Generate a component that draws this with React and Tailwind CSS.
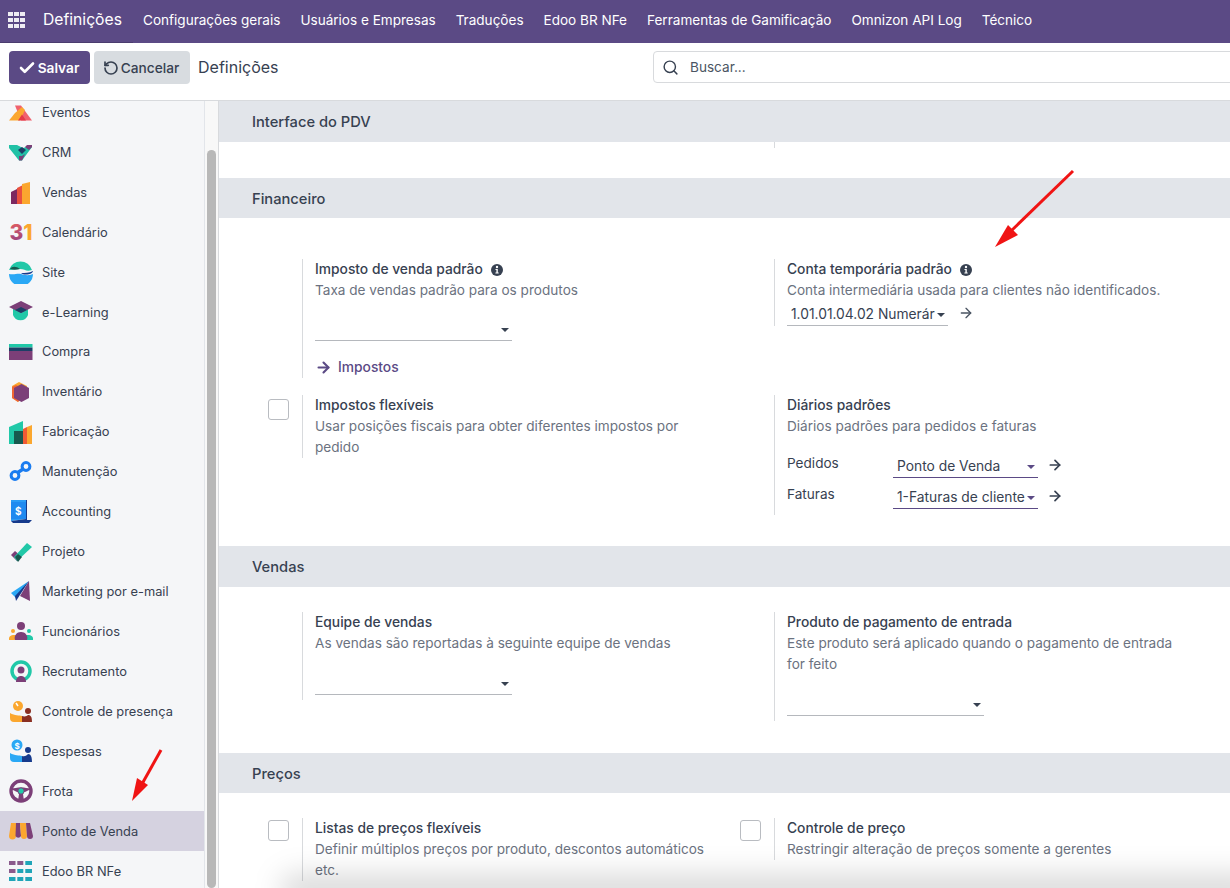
import React from 'react';
import { Check, RotateCcw, Search, ArrowRight } from 'lucide-react';

const Eventos = () => (
    <svg viewBox="0 0 24 24" className="w-6 h-6">
        <path d="M6 5.500h6l11 15H12z" fill="#f0616d" />
        <path d="M0 20.500L6 13l7-6 3 3-5 10.500z" fill="#fba72f" />
        <path d="M9 20.500l4-6 4 6z" fill="#e63946" />
    </svg>
);
const Crm = () => (
    <svg viewBox="0 0 24 24" className="w-6 h-6">
        <path d="M0 5h8l6 3 9-3v2L13 20.500h-3L0 8z" fill="#21c1a6" />
        <path d="M9 10l4-3 4 3-4 4z" fill="#1d3f66" />
        <path d="M18 5h5v2l-3 3-4-3z" fill="#7c3f78" />
        <path d="M10 16l3 0 3-2-3 6.500h-3z" fill="#7c3f78" />
    </svg>
);
const Vendas = () => (
    <svg viewBox="0 0 24 24" className="w-6 h-6">
        <path d="M2 12l6-3v15H2z" fill="#7c2860" />
        <path d="M8 8l6-3v19H8z" fill="#e9503e" />
        <path d="M13 4l8-2v22h-8z" fill="#fba72f" />
    </svg>
);
const Calendario = () => (
    <svg viewBox="0 0 24 24" className="w-6 h-6">
        <defs>
            <linearGradient id="cal3" x1="0" y1="0" x2="0" y2="1">
                <stop offset="0" stopColor="#e9605e" />
                <stop offset="1" stopColor="#8c3f85" />
            </linearGradient>
        </defs>
        <text x="0.500" y="20" fontFamily="Inter, sans-serif" fontWeight="800" fontSize="21">
            <tspan fill="url(#cal3)">3</tspan>
            <tspan fill="#fba72f">1</tspan>
        </text>
    </svg>
);
const Site = () => (
    <svg viewBox="0 0 24 24" className="w-6 h-6">
        <path d="M0 10a12 12 0 0123 0c-6 2-7-1-12-1-4 0-7 1-11 1z" fill="#21c8a8" />
        <path d="M0 14c6 1 8-1 12 0s7 2 12 0a12 12 0 01-24 0z" fill="#2aa8f5" />
        <path d="M1 9c2-3 6-3 10 0-4 1-7 1-10 0z" fill="#17594f" />
        <path d="M12 13c4 0 8 0 12-2 0 3-8 5-12 2z" fill="#163a8c" />
    </svg>
);
const Learning = () => (
    <svg viewBox="0 0 24 24" className="w-6 h-6">
        <path d="M4 9h15v6a8 8 0 01-15 0z" fill="#21c8a8" />
        <path d="M0 7l12-6 12 6-12 6z" fill="#7c3f78" />
        <path d="M6 10l6-3 6 3-6 3z" fill="#1d3f66" />
    </svg>
);
const Compra = () => (
    <svg viewBox="0 0 24 24" className="w-6 h-6">
        <path d="M0 4h23.500v3.500H0z" fill="#21c8a8" />
        <path d="M0 7.500h23.500V11H0z" fill="#1d3f66" />
        <path d="M0 11h23.500v9H0z" fill="#7c3f78" />
    </svg>
);
const Inventario = () => (
    <svg viewBox="0 0 24 24" className="w-6 h-6">
        <path d="M10 2l8 4v8l-9 8-6-4V6z" fill="#fba72f" />
        <path d="M3 7l4-2 4 2v12l-2 3-6-4z" fill="#ef5a35" opacity=".85" />
        <path d="M12.500 4l7.500 4v10l-7.500 4L5 18V8z" fill="#7c3f78" />
    </svg>
);
const Fabricacao = () => (
    <svg viewBox="0 0 24 24" className="w-6 h-6">
        <path d="M0 7L14 1v23H0z" fill="#21c8a8" />
        <path d="M5 11h9v13H5z" fill="#17594f" />
        <path d="M14 9l4-2v17h-4z" fill="#ef5a35" />
        <path d="M18 7l5-2v19h-5z" fill="#fba72f" />
    </svg>
);
const Manutencao = () => (
    <svg viewBox="0 0 24 24" className="w-6 h-6">
        <circle cx="6" cy="15.500" r="3.900" fill="none" stroke="#1a7cf0" strokeWidth="3" />
        <circle cx="17" cy="6.500" r="3.900" fill="none" stroke="#1a7cf0" strokeWidth="3" />
        <path d="M8 13l7-4.500" stroke="#1a7cf0" strokeWidth="3.400" />
    </svg>
);
const Accounting = () => (
    <svg viewBox="0 0 24 24" className="w-6 h-6">
        <path d="M2 0h15v19l-15 2z" fill="#2a9cf5" />
        <path d="M2 2h15v17H2z" fill="#1e8af0" />
        <path d="M17 0h1v20h5l-3 3H4l-2-2 15-2z" fill="#163a8c" />
        <text x="6" y="15" fontFamily="Inter, sans-serif" fontWeight="700" fontSize="10" fill="#ffffff">$</text>
    </svg>
);
const Projeto = () => (
    <svg viewBox="0 0 24 24" className="w-6 h-6">
        <path d="M2 15l4-4 6 5-4 5z" fill="#7c3f78" />
        <path d="M8 21l-3-4L18 3l5 4z" fill="#21c8a8" />
        <path d="M6 17l3-3 4 3-4 5z" fill="#17594f" />
    </svg>
);
const Marketing = () => (
    <svg viewBox="0 0 24 24" className="w-6 h-6">
        <path d="M2 13L20 1 7 18z" fill="#2aa8f5" />
        <path d="M20 1L7 21l-1-5z" fill="#163a8c" />
        <path d="M20 1l1 20-10-5z" fill="#7c3f78" />
    </svg>
);
const Funcionarios = () => (
    <svg viewBox="0 0 24 24" className="w-6 h-6">
        <circle cx="12" cy="6" r="4" fill="#7c3f78" />
        <circle cx="4" cy="11" r="2" fill="#fba72f" />
        <circle cx="20" cy="11" r="2" fill="#21c8a8" />
        <path d="M0 20a4 4 0 014-5h4v5z" fill="#fba72f" />
        <path d="M24 20a4 4 0 00-4-5h-4v5z" fill="#21c8a8" />
        <path d="M6 20a6 6 0 016-8 6 6 0 016 8z" fill="#7c3f78" />
    </svg>
);
const Recrutamento = () => (
    <svg viewBox="0 0 24 24" className="w-6 h-6">
        <circle cx="12" cy="11" r="9" fill="none" stroke="#21c8a8" strokeWidth="3.500" />
        <circle cx="12" cy="10" r="3.500" fill="#7c3f78" />
        <path d="M7 22c0-5 3-6 5-6s5 1 5 6z" fill="#7c3f78" />
    </svg>
);
const Presenca = () => (
    <svg viewBox="0 0 24 24" className="w-6 h-6">
        <circle cx="9" cy="6" r="5" fill="#fba72f" />
        <path d="M9 6l-2-3" stroke="#ffffff" strokeWidth="1.500" />
        <path d="M1 13c5 3 9 2 12 3v6H5a4 4 0 01-4-4z" fill="#fba72f" />
        <circle cx="19" cy="11" r="3" fill="#8a2f22" />
        <path d="M13 16c3 1 5 0 6-1 3 0 4 2 4 7H13z" fill="#8a2f22" />
    </svg>
);
const Despesas = () => (
    <svg viewBox="0 0 24 24" className="w-6 h-6">
        <circle cx="8" cy="6" r="5.500" fill="#2aa8f5" />
        <text x="5.500" y="9.500" fontFamily="Inter, sans-serif" fontWeight="700" fontSize="8" fill="#ffffff">$</text>
        <path d="M1 14c5 3 9 2 12 3v6H5a4 4 0 01-4-4z" fill="#2aa8f5" />
        <circle cx="19" cy="11" r="3" fill="#163a8c" />
        <path d="M13 17c3 1 5-1 6-2 3 0 4 3 4 8H13z" fill="#163a8c" />
    </svg>
);
const Frota = () => (
    <svg viewBox="0 0 24 24" className="w-6 h-6">
        <circle cx="12" cy="12" r="10" fill="none" stroke="#7c3f78" strokeWidth="3.400" />
        <path d="M2 10c6-2 14-2 20 0l-6 3H8zM10 15h4l1 7H9z" fill="#7c3f78" />
        <circle cx="12" cy="12" r="3.200" fill="#21c8a8" stroke="#7c3f78" strokeWidth="1" />
    </svg>
);
const Pdv = () => (
    <svg viewBox="0 0 24 24" className="w-6 h-6">
        <path d="M2 4h5v13a3 3 0 01-7 0z" fill="#fba72f" />
        <path d="M7 4h4l1 13a3 3 0 01-5.500 0z" fill="#7c3f78" />
        <path d="M11 4h6l1 13a3 3 0 01-6 0z" fill="#fba72f" />
        <path d="M17 4h4l3 13a3 3 0 01-6 0z" fill="#7c3f78" />
    </svg>
);
const EdooGrid = () => (
    <svg viewBox="0 0 24 24" className="w-6 h-6">
        <path d="M0 2h6.500v4H0zM8.300 2h6v4h-6z" fill="#8a5a8c" />
        <path d="M16.300 2H23v4h-6.700z" fill="#1fa5b8" />
        <path d="M0 10h6.500v4H0z" fill="#8a5a8c" />
        <path d="M8.300 10h6v4h-6zM16.300 10H23v4h-6.700zM0 18h6.500v4H0zM8.300 18h6v4h-6zM16.300 18H23v4h-6.700z" fill="#1fa5b8" />
    </svg>
);

const apps = [
    { label: 'Eventos', Icon: Eventos },
    { label: 'CRM', Icon: Crm },
    { label: 'Vendas', Icon: Vendas },
    { label: 'Calendário', Icon: Calendario },
    { label: 'Site', Icon: Site },
    { label: 'e-Learning', Icon: Learning },
    { label: 'Compra', Icon: Compra },
    { label: 'Inventário', Icon: Inventario },
    { label: 'Fabricação', Icon: Fabricacao },
    { label: 'Manutenção', Icon: Manutencao },
    { label: 'Accounting', Icon: Accounting },
    { label: 'Projeto', Icon: Projeto },
    { label: 'Marketing por e-mail', Icon: Marketing },
    { label: 'Funcionários', Icon: Funcionarios },
    { label: 'Recrutamento', Icon: Recrutamento },
    { label: 'Controle de presença', Icon: Presenca },
    { label: 'Despesas', Icon: Despesas },
    { label: 'Frota', Icon: Frota },
    { label: 'Ponto de Venda', Icon: Pdv, active: true },
    { label: 'Edoo BR NFe', Icon: EdooGrid },
];

const menu = ['Configurações gerais', 'Usuários e Empresas', 'Traduções', 'Edoo BR NFe', 'Ferramentas de Gamificação', 'Omnizon API Log', 'Técnico'];

const InfoDot = () => (
    <svg viewBox="0 0 12 12" className="ml-[8px] w-[12px] h-[12px] shrink-0">
        <circle cx="6" cy="6" r="6" fill="#374151" />
        <circle cx="6" cy="3" r="1.200" fill="#ffffff" />
        <path d="M4.500 5h2.300v3.500h.9v1H4.400v-1h1V6h-.9z" fill="#ffffff" />
    </svg>
);

const Caret = ({ purple }) => (
    <span className={`shrink-0 w-0 h-0 border-x-[4px] border-x-transparent border-t-[4px] ${purple ? 'border-t-[#5b4a85]' : 'border-t-[#374151]'}`}></span>
);

const Select = ({ value, className, purple }) => (
    <div className={`flex items-center justify-between h-[24px] border-b pt-[2px] pl-[4px] pr-[3px] text-[13.8px] text-[#374151] ${purple ? 'border-[#5b4a85]' : 'border-[#b5b8bd]'} ${className}`}>
        <span className="min-w-0 whitespace-nowrap overflow-hidden">{value}</span>
        <Caret purple={purple} />
    </div>
);

const Setting = ({ title, desc, info, checkbox, children }) => (
    <div className="flex items-start">
        <div className={`w-[48px] pl-[14px] shrink-0 ${checkbox}`}>
            {checkbox && <div className="w-[21px] h-[21px] rounded-[3px] border border-[#b9bcc1] bg-white"></div>}
        </div>
        <div className="border-l border-[#d8dadd] pl-[12px] w-[424px] pr-[15px]">
            <div className="flex items-center h-[21px] font-medium text-[13.8px] text-[#374151]">
                {title}
                {info && <InfoDot />}
            </div>
            <p className="text-[13.6px] leading-[21px] text-[#6b7280]">{desc}</p>
            {children}
        </div>
    </div>
);

const Section = ({ title, h, children }) => (
    <>
        <div className={`flex items-center pl-[33px] pt-[2px] bg-[#e2e5ea] font-medium text-[14.7px] text-[#374151] ${h}`}>{title}</div>
        {children}
    </>
);

const Row = ({ className, children }) => (
    <div className={`grid grid-cols-[472px_472px] pl-[35px] ${className}`}>{children}</div>
);

export default function App() {
    return (
        <div className="relative w-[1230px] h-[888px] overflow-hidden flex flex-col bg-white font-['Inter',sans-serif]">
            <header className="h-[43px] shrink-0 flex items-center bg-[#5b4a85] text-white">
                <div className="w-[133px] h-full flex items-center border-b border-[#4a3c6e] shrink-0 pl-[8px] pb-[2px]">
                    <div className="grid grid-cols-3 gap-[1.5px] w-[17px] mr-[18px]">
                        {[...Array(9)].map((_, i) => <span key={i} className="h-[4.5px] bg-white/90"></span>)}
                    </div>
                    <span className="text-[15.7px] whitespace-nowrap">Definições</span>
                </div>
                <nav className="flex items-center gap-[20px] ml-[10px] pb-[2px] text-[13.55px] whitespace-nowrap">
                    {menu.map((m) => <span key={m}>{m}</span>)}
                </nav>
            </header>

            <div className="h-[58px] shrink-0 flex items-start pt-[8px] pl-[9px] border-b border-[#d8dadd] bg-white">
                <button className="shrink-0 flex items-center justify-center w-[81px] h-[33px] pt-[1px] pr-[2px] rounded-[4px] bg-[#5b4a85] text-white text-[13.7px] font-semibold">
                    <Check className="w-[18px] h-[18px] mr-[2px]" strokeWidth={3.5} />
                    Salvar
                </button>
                <button className="shrink-0 flex items-center justify-center w-[96px] h-[33px] pt-[1px] pr-[2px] ml-[4px] rounded-[4px] bg-[#d8dce0] text-[#374151] text-[13.7px] font-medium">
                    <RotateCcw className="w-[16px] h-[16px] mr-[2px]" strokeWidth={2.5} />
                    Cancelar
                </button>
                <span className="shrink-0 w-[80px] ml-[8px] h-[32px] flex items-center text-[16px] text-[#374151] whitespace-nowrap">Definições</span>
                <div className="ml-[375px] w-[620px] h-[32px] shrink-0 flex items-center border border-[#d8dadd] rounded-[4px] pl-[8px] text-[13.6px] text-[#4b5563]">
                    <Search className="w-[17px] h-[17px] text-[#374151] mr-[11px]" strokeWidth={2} />
                    Buscar...
                </div>
            </div>

            <div className="flex flex-1 min-h-0">
                <aside className="w-[205px] shrink-0 overflow-hidden bg-[#f5f6f8] border-r border-[#e2e5ea]">
                    <div className="-mt-[8.5px]">
                        {apps.map(({ label, Icon, active }) => (
                            <div key={label} className={`flex items-center h-[39.95px] pl-[9px] ${active ? 'bg-[#d5d2e0]' : ''}`}>
                                <Icon />
                                <span className="ml-[9px] text-[12.85px] text-[#374151] whitespace-nowrap">{label}</span>
                            </div>
                        ))}
                    </div>
                </aside>
                <div className="w-[14px] shrink-0 bg-[#f8f8f8] border-r border-[#d8dadd] pt-[49px] pl-[2px]">
                    <div className="w-[9px] h-full rounded-full bg-[#b8b8b8]"></div>
                </div>

                <main className="flex-1 min-w-0 overflow-hidden">
                    <Section title="Interface do PDV" h="h-[41px]">
                        <div className="h-[36px]">
                            <div className="ml-[555px] h-[6px] border-l border-[#d8dadd]"></div>
                        </div>
                    </Section>

                    <Section title="Financeiro" h="h-[40px]">
                        <Row className="pt-[41px] items-start">
                            <Setting title="Imposto de venda padrão" desc="Taxa de vendas padrão para os produtos" info>
                                <Select value="" className="w-[197px] mt-[16px]" />
                                <div className="flex items-center h-[21px] mt-[16px] text-[13.8px] font-medium text-[#5b4a85]">
                                    <ArrowRight className="w-[17px] h-[17px] mr-[6px]" strokeWidth={3} />
                                    Impostos
                                </div>
                            </Setting>
                            <Setting title="Conta temporária padrão" desc="Conta intermediária usada para clientes não identificados." info>
                                <div className="flex items-center mt-[1px]">
                                    <Select value="1.01.01.04.02 Numerár" className="w-[161px]" />
                                    <ArrowRight className="ml-[10px] -mt-[2px] w-[16px] h-[16px] text-[#4b5563]" strokeWidth={2} />
                                </div>
                            </Setting>
                        </Row>
                        <Row className="pt-[17px] pb-[31px] items-start">
                            <Setting title="Impostos flexíveis" desc="Usar posições fiscais para obter diferentes impostos por pedido" checkbox="pt-[4px]" />
                            <Setting title="Diários padrões" desc="Diários padrões para pedidos e faturas">
                                <div className="grid grid-cols-[106px_145px_auto] items-center gap-y-[7px] mt-[17px] pb-[6px] text-[13.6px] text-[#374151]">
                                    <span className="-mt-[6px]">Pedidos</span>
                                    <Select value="Ponto de Venda" purple className="w-[145px]" />
                                    <ArrowRight className="ml-[9px] -mt-[2px] w-[16px] h-[16px]" strokeWidth={2.6} />
                                    <span className="-mt-[6px]">Faturas</span>
                                    <Select value="1-Faturas de cliente" purple className="w-[145px]" />
                                    <ArrowRight className="ml-[9px] -mt-[2px] w-[16px] h-[16px]" strokeWidth={2.6} />
                                </div>
                            </Setting>
                        </Row>
                    </Section>

                    <Section title="Vendas" h="h-[41px]">
                        <Row className="pt-[25px] pb-[32px] items-start">
                            <Setting title="Equipe de vendas" desc="As vendas são reportadas à seguinte equipe de vendas">
                                <Select value="" className="w-[197px] mt-[17px] mb-[5px]" />
                            </Setting>
                            <Setting title="Produto de pagamento de entrada" desc="Este produto será aplicado quando o pagamento de entrada for feito">
                                <Select value="" className="w-[197px] mt-[17px] mb-[5px]" />
                            </Setting>
                        </Row>
                    </Section>

                    <Section title="Preços" h="h-[40px]">
                        <Row className="pt-[25px] items-start">
                            <Setting title="Listas de preços flexíveis" desc="Definir múltiplos preços por produto, descontos automáticos etc." checkbox="pt-[2px]" />
                            <Setting title="Controle de preço" desc="Restringir alteração de preços somente a gerentes" checkbox="pt-[2px]" />
                        </Row>
                    </Section>
                </main>
            </div>

            {/* soft shadow along the bottom edge */}
            <div className="absolute left-[280px] -right-[30px] -bottom-[18px] h-[32px] rounded-full bg-black/15 blur-[14px] pointer-events-none"></div>

            {/* red annotation arrows */}
            <svg className="absolute inset-0 w-[1230px] h-[888px] pointer-events-none" viewBox="0 0 1230 888">
                <path d="M1073 171L1010 232" stroke="#f01414" strokeWidth="3" />
                <path d="M995 247L1008 225L1018 235z" fill="#f01414" />
                <path d="M161 750L142 784" stroke="#f01414" strokeWidth="3" />
                <path d="M132 801L137 778L148 785z" fill="#f01414" />
            </svg>
        </div>
    );
}
